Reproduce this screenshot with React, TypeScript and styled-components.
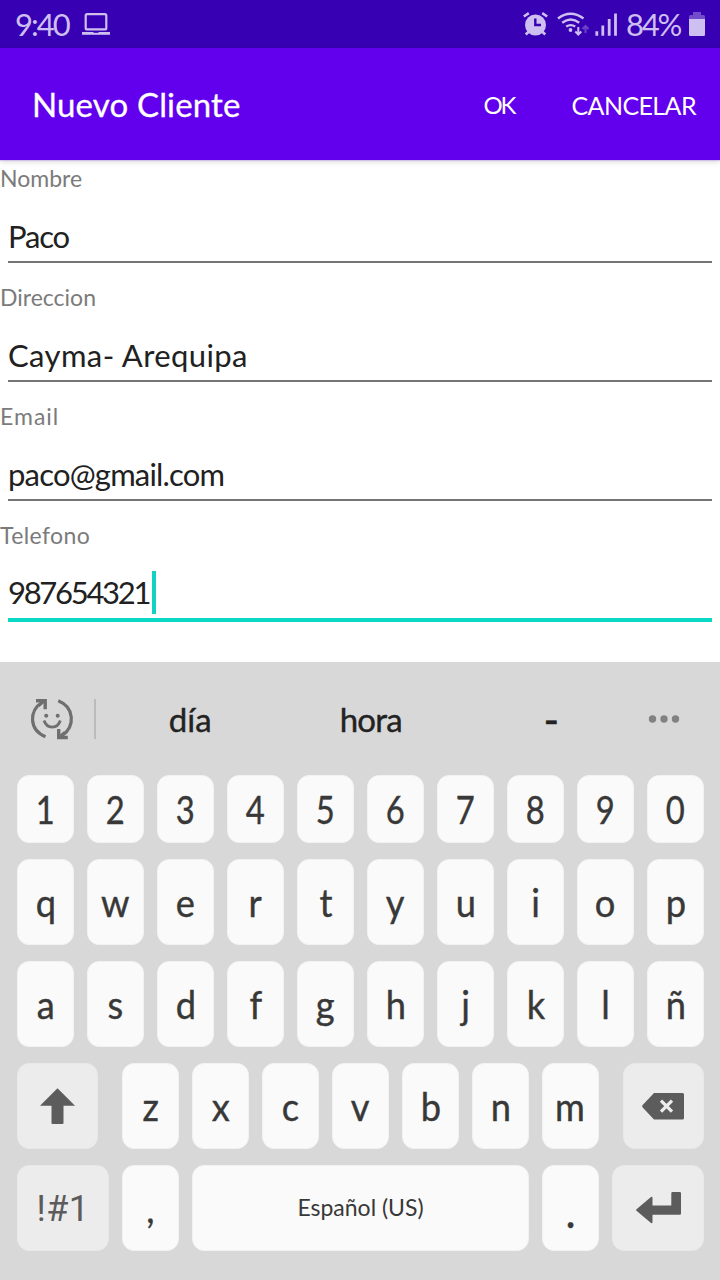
import React from 'react';
import styled, { createGlobalStyle } from 'styled-components';

const GlobalStyle = createGlobalStyle`
  * { box-sizing: border-box; }
  body { margin: 0; background: #fff; }
`;

const Screen = styled.main`
  width: 720px;
  height: 1280px;
  display: flex;
  flex-direction: column;
  background: #fff;
  overflow: hidden;
  font-family: Lato, 'Open Sans', sans-serif;
`;

const Label = styled.span<{ $size: number; $spacing?: number }>`
  font-size: ${(p) => p.$size}px;
  letter-spacing: ${(p) => p.$spacing ?? 0}px;
  line-height: 1.2;
  white-space: nowrap;
`;

const StatusBar = styled.header`
  height: 48px;
  flex: none;
  display: flex;
  align-items: center;
  padding: 0 15px;
  background: #3700b3;
  color: #cdbff0;
`;

const Clock = styled(Label)`
  width: 67px;
  padding-top: 2px;
`;

const StatusIcons = styled.div`
  margin-left: auto;
  display: flex;
  align-items: center;
`;

const Battery = styled(Label)`
  width: 63px;
  margin-left: 4px;
  padding-top: 2px;
`;

const AppBar = styled.div`
  height: 112px;
  flex: none;
  display: flex;
  align-items: center;
  padding: 2px 24px 0 32px;
  background: #6200ee;
  color: #fff;
  box-shadow: 0 1px 1px rgba(98, 0, 238, 0.16), 0 2px 6px rgba(0, 0, 0, 0.14);
  z-index: 1;
`;

const Title = styled(Label)`
  flex: 1;
  -webkit-text-stroke: 0.3px currentColor;
`;

const Action = styled.button`
  padding: 0;
  border: 0;
  margin-left: 57px;
  background: none;
  color: inherit;
  font-family: inherit;
`;

const Form = styled.form`
  height: 502px;
  flex: none;
`;

const Field = styled.label`
  height: 119px;
  display: flex;
  flex-direction: column;
  color: #7b7b7b;
`;

const FieldName = styled(Label)`
  height: 38px;
  padding-top: 5px;
`;

const Entry = styled.div<{ $focused?: boolean }>`
  height: ${(p) => (p.$focused ? 67 : 65)}px;
  margin: 0 8px;
  padding: ${(p) => (p.$focused ? '16px 0 4px' : '17px 0 3px')};
  display: flex;
  align-items: center;
  color: #212121;
  border-bottom: ${(p) => (p.$focused ? '4px solid #09d8c5' : '2px solid #757575')};
`;

const Caret = styled.i`
  width: 4px;
  height: 43px;
  margin-left: 3px;
  background: #14d2c1;
`;

const Keyboard = styled.section`
  flex: 1;
  padding: 0 16px 0 17px;
  background: #d8d8d8;
  color: #383838;
`;

const Suggestions = styled.div`
  height: 113px;
  display: flex;
  align-items: center;
  padding-left: 13px;
  color: #222;
`;

const Divider = styled.i`
  width: 2px;
  height: 40px;
  margin: 1px 4px 0 20px;
  background: #bbb;
`;

const Suggestion = styled(Label)`
  width: 180.5px;
  padding-top: 2px;
  text-align: center;
  -webkit-text-stroke: 0.4px currentColor;
`;

const Keys = styled.div`
  display: flex;
  flex-direction: column;
  gap: 16px;
`;

const KeyRow = styled.div<{ $short?: boolean }>`
  display: flex;
  justify-content: space-between;
  height: ${(p) => (p.$short ? 68 : 86)}px;
`;

const KeyGroup = styled.div`
  display: flex;
  gap: 13px;
`;

const Key = styled.button<{ $width?: number; $dark?: boolean; $drop?: number }>`
  width: ${(p) => p.$width ?? 57}px;
  padding: ${(p) => p.$drop ?? 0}px 0 0;
  border: 1px solid ${(p) => (p.$dark ? '#e8e8e8' : '#f2f2f2')};
  border-radius: 12px;
  display: flex;
  align-items: center;
  justify-content: center;
  background: ${(p) => (p.$dark ? '#ececec' : '#fafafa')};
  color: ${(p) => (p.$dark ? '#5c5c5c' : '#383838')};
  font-family: ${(p) => (p.$dark ? 'Roboto, sans-serif' : 'inherit')};
`;

const Glyph = styled(Label)<{ $narrow?: boolean }>`
  transform: scaleX(${(p) => (p.$narrow ? 0.84 : 0.93)});
  -webkit-text-stroke: 0.4px currentColor;
`;

const LaptopIcon = () => (
  <svg width="28" height="22" viewBox="0 0 28 22" fill="none">
    <rect x="3.7" y="1.2" width="20.6" height="15.2" rx="1.5" stroke="currentColor" strokeWidth="2.2" />
    <path d="M0 19h28v2.800H0z" fill="currentColor" />
    <path d="M11.500 19h5v.800h-5z" fill="#3700b3" />
  </svg>
);

const SignalIcons = () => (
  <svg width="104" height="32" viewBox="518 8 104 32" fill="none" stroke="currentColor">
    <circle cx="535.5" cy="25" r="10.5" fill="currentColor" stroke="none" />
    <path d="M523.8 16.5l5-3.4M547.2 16.500l-5-3.400" strokeWidth="2.600" />
    <path d="M529 31.500l-3.300 3M542 31.500l3.300 3" strokeWidth="2.800" />
    <path d="M535.300 18.500v6.500h5.700" stroke="#3700b3" strokeWidth="2.400" />
    <path d="M558 18.500q12.500-9.500 25.500 0M562.200 22.800q8.500-6.500 17 0M566.200 26.600q4.500-3 9 0" strokeWidth="2.400" />
    <circle cx="570.500" cy="30" r="1.900" fill="currentColor" stroke="none" />
    <path d="M578.300 27v7.500M575.300 31.500l3 3 3-3" strokeWidth="2" />
    <path d="M585.500 33v-7M582.500 29l3-3 3 3" strokeWidth="2" opacity=".35" />
    <path d="M596.800 31.200v4.600M602.800 25.500v10.300M609.200 19v16.800M615.500 13.500v22.300" strokeWidth="2.800" />
  </svg>
);

const BatteryIcon = () => (
  <svg width="16" height="24" viewBox="0 0 16 24" fill="currentColor">
    <path opacity=".4" d="M4 0h8v3h2.500q1.500 0 1.500 1.500V7H0V4.500Q0 3 1.500 3H4z" />
    <path d="M0 7h16v15.500q0 1.500-1.500 1.500h-13Q0 24 0 22.500z" />
  </svg>
);

const EmojiSwapIcon = () => (
  <svg width="44" height="42" viewBox="30 698 44 42" fill="none" stroke="#6f6f6f">
    <path d="M45.500 736.800C29 730 28.500 711 42.500 702M58.200 700.800c16.300 6.500 17.300 25.500 3.800 35" strokeWidth="3.200" />
    <path d="M36 700.700h9.200v8.600M67.800 737.500h-9.100V729" strokeWidth="3.400" />
    <path d="M38.500 706l6-5M65 732l-6 5" strokeWidth="2.500" />
    <path d="M44 720.500c3 8.800 13.500 8.800 16.300 0" strokeWidth="2.800" />
    <circle cx="46.200" cy="715.800" r="2" fill="#6f6f6f" stroke="none" />
    <circle cx="57.700" cy="715.800" r="2" fill="#6f6f6f" stroke="none" />
  </svg>
);

const MoreDots = styled.svg`
  margin-left: 6px;
`;

const MoreIcon = () => (
  <MoreDots width="32" height="10" viewBox="0 0 32 10" fill="#828282">
    <circle cx="4.500" cy="5" r="3.700" />
    <circle cx="16" cy="5" r="3.700" />
    <circle cx="27.500" cy="5" r="3.700" />
  </MoreDots>
);

const ShiftIcon = () => (
  <svg width="36" height="36" viewBox="0 0 36 36" fill="currentColor">
    <path d="M17.500.3L35 17.700H23.500V35q0 1-1 1h-10q-1 0-1-1V17.700H0z" />
  </svg>
);

const BackspaceIcon = () => (
  <svg width="44" height="27" viewBox="0 0 44 27">
    <path d="M12 0h28.500Q42 0 42 1.500v23.500Q42 26.500 40.500 26.500H12L.7 14.500q-1-1.200 0-2.400z" fill="currentColor" />
    <path d="M19 7.700l11 11M30 7.700l-11 11" stroke="#ececec" strokeWidth="3.300" />
  </svg>
);

const EnterIcon = () => (
  <svg width="45" height="32" viewBox="0 0 45 32" fill="currentColor">
    <path d="M36.500 0H43.800Q45 0 45 1.200V21.500Q45 22.700 43.800 22.700H16.500V30.500q-.5 1.200-1.500.5L.5 18.800q-.8-.8 0-1.600L15 5q1-.7 1.500.5v8H35.300V1.200Q35.300 0 36.500 0z" />
  </svg>
);

const fields = [
  { name: 'Nombre', value: 'Paco', nameSpacing: 0, size: 31, spacing: -1.2 },
  { name: 'Direccion', value: 'Cayma- Arequipa', nameSpacing: 0, size: 31, spacing: 0.4 },
  { name: 'Email', value: 'paco@gmail.com', nameSpacing: 1, size: 31, spacing: -0.8 },
  { name: 'Telefono', value: '987654321', nameSpacing: 0.4, size: 31, spacing: -2.3, focused: true },
];

const suggestions = ['día', 'hora', '-'];

const letterKeys = (letters: string, narrow = false) =>
  letters.split('').map((c) => (
    <Key key={c} type="button">
      <Glyph $size={39} $narrow={narrow}>{c}</Glyph>
    </Key>
  ));

export default function App() {
  return (
    <Screen>
      <GlobalStyle />
      <StatusBar>
        <Clock $size={31} $spacing={-2}>9:40</Clock>
        <LaptopIcon />
        <StatusIcons>
          <SignalIcons />
          <Battery $size={31} $spacing={-2.2}>84%</Battery>
          <BatteryIcon />
        </StatusIcons>
      </StatusBar>
      <AppBar>
        <Title $size={33} $spacing={0.15}>Nuevo Cliente</Title>
        <Action type="button"><Label $size={24} $spacing={-2}>OK</Label></Action>
        <Action type="button"><Label $size={25} $spacing={-0.6}>CANCELAR</Label></Action>
      </AppBar>
      <Form>
        {fields.map((f) => (
          <Field key={f.name}>
            <FieldName $size={23} $spacing={f.nameSpacing}>{f.name}</FieldName>
            <Entry $focused={f.focused}>
              <Label $size={f.size} $spacing={f.spacing}>{f.value}</Label>
              {f.focused && <Caret />}
            </Entry>
          </Field>
        ))}
      </Form>
      <Keyboard>
        <Suggestions>
          <EmojiSwapIcon />
          <Divider />
          {suggestions.map((s) => (
            <Suggestion key={s} $size={s === '-' ? 42 : 33} $spacing={s === 'hora' ? -0.8 : 0}>{s}</Suggestion>
          ))}
          <MoreIcon />
        </Suggestions>
        <Keys>
          <KeyRow $short>{letterKeys('1234567890', true)}</KeyRow>
          <KeyRow>{letterKeys('qwertyuiop')}</KeyRow>
          <KeyRow>{letterKeys('asdfghjklñ')}</KeyRow>
          <KeyRow>
            <Key type="button" $width={81} $dark><ShiftIcon /></Key>
            <KeyGroup>{letterKeys('zxcvbnm')}</KeyGroup>
            <Key type="button" $width={81} $dark><BackspaceIcon /></Key>
          </KeyRow>
          <KeyRow>
            <Key type="button" $width={92} $dark $drop={3}><Label $size={36} $spacing={0.4}>!#1</Label></Key>
            <Key type="button"><Glyph $size={39}>,</Glyph></Key>
            <Key type="button" $width={337}><Label $size={23}>Español (US)</Label></Key>
            <Key type="button" $drop={6}><Glyph $size={46}>.</Glyph></Key>
            <Key type="button" $width={92} $dark><EnterIcon /></Key>
          </KeyRow>
        </Keys>
      </Keyboard>
    </Screen>
  );
}
